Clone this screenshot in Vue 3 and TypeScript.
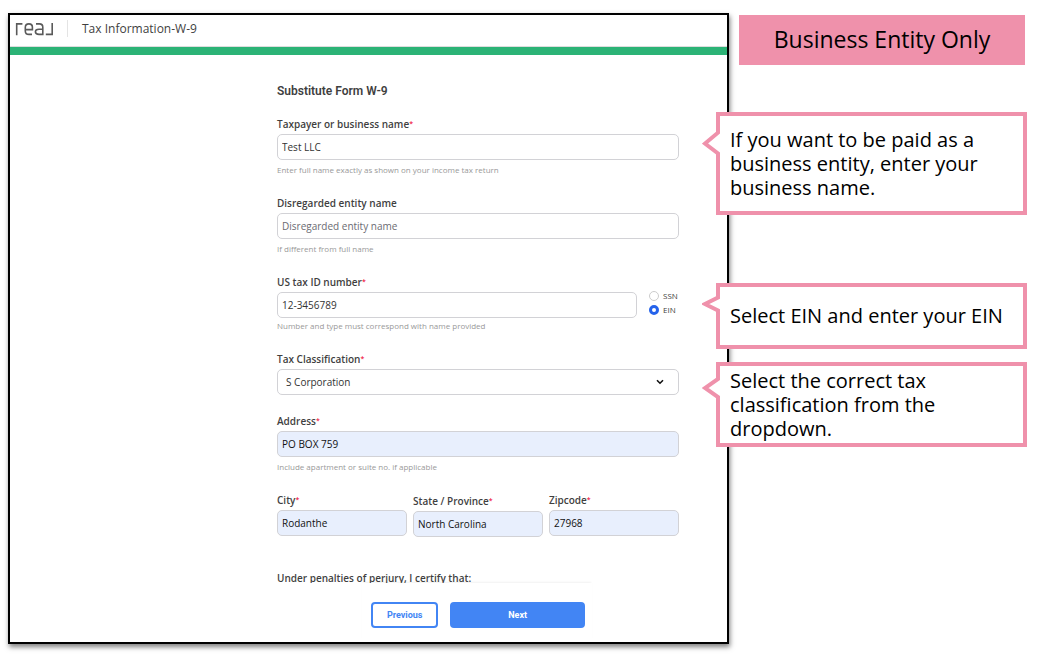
<script setup lang="ts">
import { reactive } from 'vue'

const form = reactive({
  name: 'Test LLC',
  disregarded: '',
  taxId: '12-3456789',
  idType: 'EIN',
  classification: 'S Corporation',
  address: 'PO BOX 759',
  city: 'Rodanthe',
  state: 'North Carolina',
  zip: '27968',
})

const idTypes: string[] = ['SSN', 'EIN']
const classifications: string[] = ['Individual', 'C Corporation', 'S Corporation', 'Partnership']
</script>

<template>
  <div class="page">
    <section class="frame">
      <header class="top">
        <svg class="logo" viewBox="0 0 40 16" role="img" aria-label="real">
          <g fill="none" stroke="#5a5a5a" stroke-width="1.6">
            <path d="M1.7 14.2V2.9H7.4" />
            <path d="M10.3 8.6H17.4V6.2Q17.4 2.9 13.9 2.9Q10.3 2.9 10.3 6.4V10Q10.3 13.4 13.9 13.4H17" />
            <path d="M21 2.9H24.4Q27.8 2.9 27.8 6.2V13.4H24Q20.4 13.4 20.4 10.8Q20.4 8.2 24 8.2H27.8" />
            <path d="M37.2 2V13.4H30.8" />
          </g>
        </svg>
        <span class="divider"></span>
        <h1>Tax Information-W-9</h1>
      </header>
      <div class="progress"></div>

      <form class="content" @submit.prevent>
        <h2>Substitute Form W-9</h2>

        <div class="field">
          <label for="name">Taxpayer or business name<sup>*</sup></label>
          <input id="name" v-model="form.name" type="text" />
          <p class="hint">Enter full name exactly as shown on your income tax return</p>
        </div>

        <div class="field">
          <label for="entity">Disregarded entity name</label>
          <input id="entity" v-model="form.disregarded" type="text" placeholder="Disregarded entity name" />
          <p class="hint">If different from full name</p>
        </div>

        <div class="field">
          <label for="taxid">US tax ID number<sup>*</sup></label>
          <div class="id-row">
            <input id="taxid" v-model="form.taxId" type="text" />
            <div class="radios">
              <label v-for="t in idTypes" :key="t" class="radio">
                <input v-model="form.idType" type="radio" name="idtype" :value="t" />{{ t }}
              </label>
            </div>
          </div>
          <p class="hint tight">Number and type must correspond with name provided</p>
        </div>

        <div class="field">
          <label for="class">Tax Classification<sup>*</sup></label>
          <div class="select">
            <select id="class" v-model="form.classification">
              <option v-for="c in classifications" :key="c">{{ c }}</option>
            </select>
            <svg class="chevron" viewBox="0 0 8 6" aria-hidden="true">
              <path d="M1 1.2L4 4.2L7 1.2" fill="none" stroke="#111" stroke-width="1.6" />
            </svg>
          </div>
        </div>

        <div class="field">
          <label for="address">Address<sup>*</sup></label>
          <input id="address" v-model="form.address" class="filled" type="text" />
          <p class="hint">Include apartment or suite no. if applicable</p>
        </div>

        <div class="thirds">
          <div class="field">
            <label for="city">City<sup>*</sup></label>
            <input id="city" v-model="form.city" class="filled" type="text" />
          </div>
          <div class="field lower">
            <label for="state">State / Province<sup>*</sup></label>
            <input id="state" v-model="form.state" class="filled" type="text" />
          </div>
          <div class="field">
            <label for="zip">Zipcode<sup>*</sup></label>
            <input id="zip" v-model="form.zip" class="filled" type="text" />
          </div>
        </div>

        <p class="certify">Under penalties of perjury, I certify that:</p>
      </form>

      <footer class="footer">
        <div class="actions">
          <button type="button" class="previous">Previous</button>
          <button type="button" class="next">Next</button>
        </div>
      </footer>
    </section>

    <aside class="notes">
      <h2 class="banner">Business Entity Only</h2>
      <div class="callout name-note">
        <svg class="tail" viewBox="0 0 18 28" aria-hidden="true">
          <path d="M18 2L3 14.5L18 26" />
        </svg>
        <p>If you want to be paid as a business entity, enter your business name.</p>
      </div>
      <div class="callout ein-note">
        <svg class="tail" viewBox="0 0 18 18" aria-hidden="true">
          <path d="M18 1.5L3 9L18 16.5" />
        </svg>
        <p>Select EIN and enter your EIN</p>
      </div>
      <div class="callout class-note">
        <svg class="tail" viewBox="0 0 18 24" aria-hidden="true">
          <path d="M18 1.5L3 12L18 22.5" />
        </svg>
        <p>Select the correct tax classification from the dropdown.</p>
      </div>
    </aside>
  </div>
</template>

<style>
body {
  margin: 0;
  background: #fff;
}
</style>

<style scoped>
* {
  box-sizing: border-box;
}
h1,
h2,
p {
  margin: 0;
}
.page {
  display: grid;
  grid-template-columns: minmax(0, 1fr) 286px;
  gap: 10px;
  padding: 13px 14px 13px 8px;
  font-family: "Open Sans", "Noto Sans", sans-serif;
  color: #3f3f3f;
}
.frame {
  border: 2px solid #000;
  background: #fff;
  box-shadow: 1px 3px 5px rgba(0, 0, 0, 0.5);
}
.top {
  display: flex;
  align-items: center;
  height: 32px;
  padding: 0 5px 4px;
  border-bottom: 1px solid #ddd;
}
.logo {
  width: 40px;
  height: 16px;
}
.divider {
  width: 1px;
  height: 17px;
  margin: 0 14px 0 12px;
  background: #e4e4e4;
}
.top h1 {
  font-size: 12px;
  line-height: 16px;
  font-weight: 400;
}
.progress {
  height: 8px;
  background: #2cb376;
}
.content {
  padding: 28px 48px 0 267px;
}
.content h2 {
  margin-bottom: 17px;
  font-family: Roboto, sans-serif;
  font-size: 12px;
  line-height: 16px;
  font-weight: 600;
}
.field {
  margin-bottom: 18px;
}
.field > label {
  display: block;
  margin-bottom: 2px;
  font-size: 10px;
  line-height: 16px;
  font-weight: 600;
}
sup {
  color: #f0284a;
  font-size: 7px;
  line-height: 0;
  vertical-align: 2px;
}
input[type="text"],
select {
  display: block;
  width: 100%;
  min-width: 0;
  height: 26px;
  padding: 0 4px;
  border: 1px solid #d2d2d6;
  border-radius: 5px;
  background: #fff;
  color: #333;
  font: 400 10px/16px "Open Sans", "Noto Sans", sans-serif;
  outline: none;
}
input::placeholder {
  color: #6b6b72;
  opacity: 1;
}
input.filled {
  background: #e8effd;
  color: #111;
}
.hint {
  margin-top: 3px;
  color: #999;
  font-size: 8px;
  line-height: 14px;
}
.hint.tight {
  margin-top: 1px;
}
.id-row {
  display: flex;
  gap: 12px;
}
.id-row > input {
  flex: 1;
}
.radios {
  display: flex;
  flex-direction: column;
  width: 30px;
  height: 26px;
  justify-content: flex-end;
  padding-bottom: 1px;
}
.radio {
  display: flex;
  align-items: center;
  gap: 4px;
  font-size: 8px;
  line-height: 14px;
}
.radio input {
  flex: none;
  width: 10px;
  height: 10px;
  margin: 0;
  appearance: none;
  border: 1px solid #ccc;
  border-radius: 50%;
  background: #fff;
}
.radio input:checked {
  border: 3px solid #2563eb;
}
.select {
  position: relative;
}
select {
  appearance: none;
  padding: 0 8px;
}
.chevron {
  position: absolute;
  top: 10px;
  right: 15px;
  width: 8px;
  height: 6px;
  pointer-events: none;
}
.thirds {
  display: grid;
  grid-template-columns: repeat(3, minmax(0, 1fr));
  gap: 6px;
}
.thirds .field {
  margin-bottom: 0;
}
.thirds .lower {
  padding-top: 1px;
}
.certify {
  margin-top: 33px;
  font-size: 10px;
  line-height: 16px;
  font-weight: 600;
}
.footer {
  position: relative;
  margin-top: -3px;
  padding-left: 352px;
  background: #fff;
}
.actions {
  display: grid;
  grid-template-columns: 1fr 2fr;
  gap: 12px;
  width: 230px;
  padding: 19px 7px 14px 9px;
  box-shadow: 0 -2px 2px -1px rgba(0, 0, 0, 0.06);
}
button {
  height: 26px;
  padding: 0;
  border: 2px solid #4285f4;
  border-radius: 4px;
  font: 700 9px/16px Roboto, sans-serif;
}
.previous {
  background: #fff;
  color: #4285f4;
}
.next {
  background: #4285f4;
  color: #fff;
}
.notes {
  color: #000;
}
.banner {
  margin-top: 2px;
  padding: 7px 0 9px;
  background: #ef91ab;
  text-align: center;
  font-size: 23px;
  line-height: 34px;
  font-weight: 400;
}
.callout {
  position: relative;
  display: flex;
  align-items: center;
  margin: 0 -2px 0 -23px;
  padding: 0 20px 0 10px;
  border: 4px solid #ef91ab;
  background: #fff;
  font-size: 20px;
  line-height: 24px;
}
.name-note {
  min-height: 103px;
  margin-top: 47px;
}
.ein-note {
  min-height: 66px;
  margin-top: 68px;
  padding-right: 0;
}
.class-note {
  min-height: 85px;
  margin-top: 13px;
}
.tail {
  position: absolute;
  left: -18px;
  width: 18px;
  fill: #fff;
  stroke: #ef91ab;
  stroke-width: 4;
}
.name-note .tail {
  top: 13px;
  height: 28px;
}
.ein-note .tail {
  top: 8px;
  height: 18px;
}
.class-note .tail {
  top: 10px;
  height: 24px;
}
</style>
